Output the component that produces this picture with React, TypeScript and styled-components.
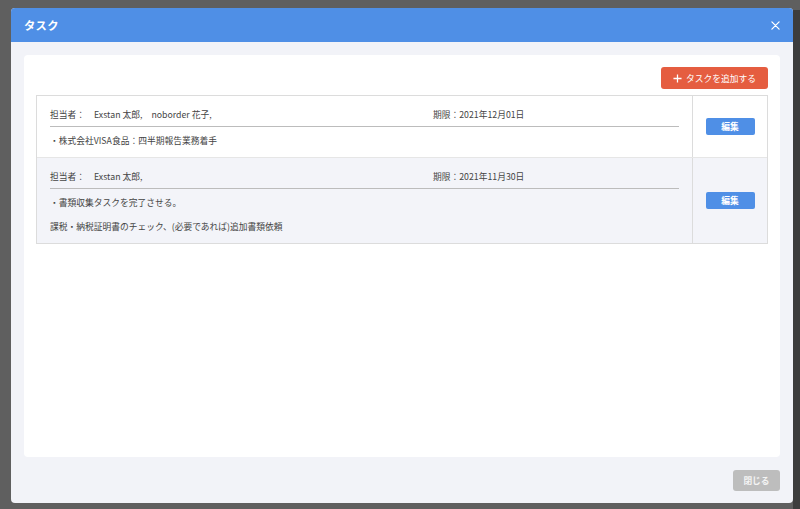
import styled, { createGlobalStyle } from 'styled-components';

interface Task {
  assignees: string[];
  deadline: string;
  lines: string[];
}

const tasks: Task[] = [
  {
    assignees: ['Exstan 太郎,', 'noborder 花子,'],
    deadline: '2021年12月01日',
    lines: ['・株式会社VISA食品：四半期報告業務着手'],
  },
  {
    assignees: ['Exstan 太郎,'],
    deadline: '2021年11月30日',
    lines: ['・書類収集タスクを完了させる。', '課税・納税証明書のチェック、(必要であれば)追加書類依頼'],
  },
];

const GlobalStyle = createGlobalStyle`
  html, body {
    margin: 0;
    padding: 0;
  }
  body {
    width: 800px;
    height: 509px;
    overflow: hidden;
    background:
      linear-gradient(to right, transparent 793px, #3d3d3d 793px) 0 10px / 100% 100% no-repeat,
      #5f5f5f;
    font-family: 'Noto Sans CJK JP', 'Noto Sans', sans-serif;
  }
`;

export default function App() {
  return (
    <>
      <GlobalStyle />
      <Backdrop>
        <Modal>
          <Header>
            <Title>タスク</Title>
            <CloseIcon viewBox="0 0 10 10">
              <path d="M1 1 L9 9 M9 1 L1 9" stroke="#fff" strokeWidth="1.4" strokeLinecap="round" />
            </CloseIcon>
          </Header>
          <Body>
            <Panel>
              <Toolbar>
                <AddButton>
                  <svg width="9" height="9" viewBox="0 0 10 10">
                    <path d="M5 0.5 V9.5 M0.5 5 H9.5" stroke="#fff" strokeWidth="1.4" />
                  </svg>
                  タスクを追加する
                </AddButton>
              </Toolbar>
              <Table>
                {tasks.map((task, i) => (
                  <Row key={i} $striped={i % 2 === 1}>
                    <Content>
                      <RowHead>
                        <Assignees>
                          <span>担当者：</span>
                          {task.assignees.map((a) => (
                            <span key={a}>{a}</span>
                          ))}
                        </Assignees>
                        <Deadline>期限：{task.deadline}</Deadline>
                      </RowHead>
                      {task.lines.map((l) => (
                        <Line key={l}>{l}</Line>
                      ))}
                    </Content>
                    <Action>
                      <EditButton>編集</EditButton>
                    </Action>
                  </Row>
                ))}
              </Table>
            </Panel>
          </Body>
          <Footer>
            <CloseButton>閉じる</CloseButton>
          </Footer>
        </Modal>
      </Backdrop>
    </>
  );
}

const Backdrop = styled.div`
  padding: 8px 7px 6px 11px;
  height: 509px;
  box-sizing: border-box;
`;

const Modal = styled.div`
  width: 782px;
  height: 495px;
  background: #f2f3f8;
  border-radius: 4px;
  overflow: hidden;
  display: flex;
  flex-direction: column;
`;

const Header = styled.div`
  height: 34px;
  flex: 0 0 34px;
  background: #4f8fe6;
  display: flex;
  align-items: center;
  justify-content: space-between;
  padding: 0 13px;
`;

const Title = styled.div`
  color: #fff;
  font-size: 11.3px;
  font-weight: 700;
  letter-spacing: 0.3px;
`;

const CloseIcon = styled.svg`
  width: 9px;
  height: 9px;
`;

const Body = styled.div`
  padding: 13px 13px 0;
  flex: 1;
  display: flex;
`;

const Panel = styled.div`
  flex: 1;
  height: 402px;
  background: #fff;
  border-radius: 4px;
  padding: 12px;
  box-sizing: border-box;
`;

const Toolbar = styled.div`
  display: flex;
  justify-content: flex-end;
  margin-bottom: 6px;
`;

const AddButton = styled.button`
  width: 107px;
  height: 22px;
  border: none;
  border-radius: 3px;
  background: #e55d40;
  color: #fff;
  font-family: inherit;
  font-size: 8.75px;
  display: flex;
  align-items: center;
  justify-content: center;
  gap: 4px;
  padding: 0;
  svg {
    margin-top: 1px;
  }
`;

const Table = styled.div`
  border: 1px solid #dcdcdc;
`;

const Row = styled.div<{ $striped: boolean }>`
  display: flex;
  background: ${({ $striped }) => ($striped ? '#f3f4f9' : '#fff')};
  & + & {
    border-top: 1px solid #e6e6e6;
  }
`;

const Content = styled.div`
  flex: 1;
  padding: 12px 13px 9px 13px;
  color: #444;
  font-size: 8.75px;
`;

const RowHead = styled.div`
  display: flex;
  height: 14px;
  line-height: 14px;
  padding-bottom: 4px;
  border-bottom: 1.5px solid #bcbcbc;
  margin-bottom: 7px;
`;

const Assignees = styled.div`
  flex: 0 0 383px;
  display: flex;
  gap: 9px;
`;

const Deadline = styled.div``;

const Line = styled.div`
  line-height: 14px;
  & + & {
    margin-top: 10px;
  }
`;

const Action = styled.div`
  flex: 0 0 74px;
  border-left: 1px solid #dcdcdc;
  display: flex;
  align-items: center;
  justify-content: center;
`;

const EditButton = styled.button`
  width: 49px;
  height: 17px;
  border: none;
  border-radius: 2px;
  background: #4f8fe6;
  color: #fff;
  font-family: inherit;
  font-size: 8.75px;
  font-weight: 700;
  padding: 0;
`;

const Footer = styled.div`
  display: flex;
  justify-content: flex-end;
  padding: 13px 13px 12px;
`;

const CloseButton = styled.button`
  width: 47px;
  height: 21px;
  border: none;
  border-radius: 3px;
  background: #bdbdbd;
  color: #f4f4f4;
  font-family: inherit;
  font-size: 8.75px;
  font-weight: 700;
  padding: 0;
`;
